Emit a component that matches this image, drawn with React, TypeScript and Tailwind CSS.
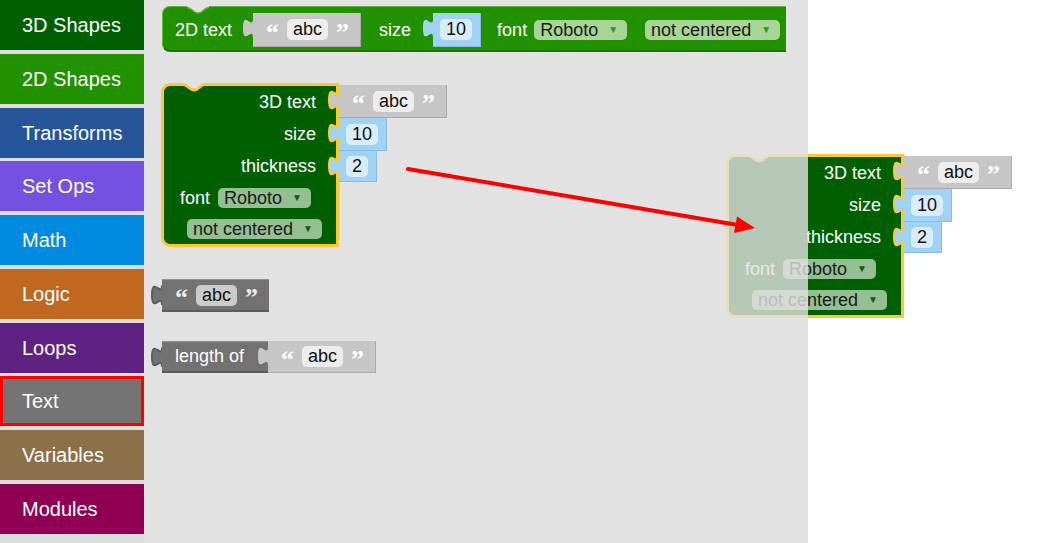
import React from "react";

// toolbox categories, top to bottom
const categories = [
  { name: "3D Shapes", bg: "bg-[#006000]" },
  { name: "2D Shapes", bg: "bg-[#219100]" },
  { name: "Transforms", bg: "bg-[#27559a]" },
  { name: "Set Ops", bg: "bg-[#7451e0]" },
  { name: "Math", bg: "bg-[#008ae0]" },
  { name: "Logic", bg: "bg-[#c06820]" },
  { name: "Loops", bg: "bg-[#602282]" },
  { name: "Text", bg: "bg-[#747474]", selected: true },
  { name: "Variables", bg: "bg-[#8c7049]" },
  { name: "Modules", bg: "bg-[#900052]" },
];

function Sidebar() {
  return (
    <div className="flex w-[144px] shrink-0 flex-col gap-[3.75px] bg-[#dddddd]">
      {categories.map((cat) => (
        <div
          key={cat.name}
          className={`flex h-[50px] items-center text-[20px] text-white ${cat.bg} ${
            cat.selected ? "border-[3px] border-[#ff0000] pl-[19px]" : "pl-[22px]"
          }`}
        >
          {cat.name}
        </div>
      ))}
    </div>
  );
}

// output tab on the left side of a value block
function Tab({ fill, stroke }: { fill: string; stroke?: string }) {
  return (
    <svg width="13" height="21" viewBox="0 0 13 21" className="absolute left-[-11px] top-[5px]">
      <path d="M11,0.5 C11,13 1,-9.5 1,10 S11,7 11,20" fill={fill} stroke={stroke ?? "none"} strokeWidth={stroke ? 2 : 0} />
      <rect x="11" y="0" width="2" height="21" fill={fill} />
    </svg>
  );
}

// previous-connection notch at the top of a statement block
function Notch({ stroke, width, className }: { stroke: string; width: number; className: string }) {
  return (
    <svg width="22" height="10" viewBox="0 0 22 10" className={`absolute ${className}`}>
      <path d="M0,0 L22,0 L22,1.5 C17,1.5 16,7 11,7 C6,7 5,1.5 0,1.5 Z" fill="#e2e2e2" />
      <path d="M22,1.5 C17,1.5 16,7 11,7 C6,7 5,1.5 0,1.5" fill="none" stroke={stroke} strokeWidth={width} />
    </svg>
  );
}

function Quote({ dark, children }: { dark?: boolean; children: string }) {
  return (
    <span
      className={`mt-[-2px] h-[14px] font-['Liberation_Serif',serif] text-[26px] font-bold leading-[22px] ${
        dark ? "text-[#ececec]" : "text-white"
      }`}
    >
      {children}
    </span>
  );
}

function TextValue({
  dark,
  h,
  tabStroke,
}: {
  dark?: boolean;
  h: string;
  tabStroke?: string;
}) {
  const fill = dark ? "#727272" : "#c6c6c6";
  return (
    <div
      className={`relative flex shrink-0 items-center gap-[8px] pl-[13px] pr-[11px] ${h} ${
        dark
          ? "border-t border-b-2 border-t-[#8e8e8e] border-b-[#5b5b5b] bg-[#727272]"
          : "border-r border-b border-r-[#ababab] border-b-[#ababab] bg-[#c6c6c6]"
      }`}
    >
      <Tab fill={fill} stroke={tabStroke} />
      <Quote dark={dark}>“</Quote>
      <span
        className={`rounded-[5px] px-[6px] text-[18px] leading-[21px] text-[#111] ${
          dark ? "bg-[#cbcbcb]" : "bg-[#ededed]"
        }`}
      >
        abc
      </span>
      <Quote dark={dark}>”</Quote>
    </div>
  );
}

function NumValue({ value, h, tabStroke }: { value: string; h: string; tabStroke?: string }) {
  return (
    <div
      className={`relative flex shrink-0 items-center border-r border-b border-r-[#86bde3] border-b-[#86bde3] bg-[#a0d2f3] pl-[7px] pr-[8px] ${h}`}
    >
      <Tab fill="#a0d2f3" stroke={tabStroke} />
      <span className="rounded-[5px] bg-[#d9ecfa] px-[6px] text-[18px] leading-[21px] text-[#111]">{value}</span>
    </div>
  );
}

function Dropdown({ label, light }: { label: string; light?: boolean }) {
  return (
    <span
      className={`flex h-[20px] items-center gap-[10px] rounded-[5px] pl-[6px] pr-[9px] text-[18px] leading-[20px] text-[#1a1a1a] ${
        light ? "bg-[#a6d597]" : "bg-[#93bf93]"
      }`}
    >
      {label}
      <span className={`text-[10px] ${light ? "text-[#2c9a14]" : "text-[#0b5e0b]"}`}>▼</span>
    </span>
  );
}

function Block3D({ className }: { className: string }) {
  const yellow = "#fcc734";
  return (
    <div className={`absolute flex items-start ${className}`}>
      <div className="relative flex w-[178px] flex-col rounded-l-[9px] border-[3px] border-[#fcc734] bg-[#005f00] text-[18px] text-white">
        <Notch stroke={yellow} width={3} className="left-[19px] top-[-3px]" />
        <div className="flex h-[32px] items-center justify-end pr-[20px]">3D text</div>
        <div className="flex h-[32px] items-center justify-end pr-[20px]">size</div>
        <div className="flex h-[32px] items-center justify-end pr-[20px]">thickness</div>
        <div className="flex h-[32px] items-center gap-[8px] pl-[16px]">
          font <Dropdown label="Roboto" />
        </div>
        <div className="flex h-[30px] items-center pl-[23px]">
          <Dropdown label="not centered" />
        </div>
      </div>
      <div className="flex flex-col items-start pt-[2px]">
        <TextValue h="h-[33px]" tabStroke={yellow} />
        <NumValue value="10" h="h-[33px]" tabStroke={yellow} />
        <NumValue value="2" h="h-[31px]" tabStroke={yellow} />
      </div>
    </div>
  );
}

export default function App() {
  return (
    <div className="relative flex h-[543px] w-[1063px] overflow-hidden bg-white font-['Liberation_Sans',Arial,sans-serif]">
      <Sidebar />
      <div className="h-full w-[664px] shrink-0 bg-[#e2e2e2]" />
      <div className="flex-1 bg-white" />

      {/* 2D text block */}
      <div className="absolute left-[162px] top-[6px] flex h-[46px] w-[624px] items-center rounded-l-[8px] border-t border-l border-b-2 border-t-[#5cb43e] border-l-[#5cb43e] border-b-[#1b7300] bg-[#229100] pl-[12px] pt-[3px] text-[18px] text-white">
        <Notch stroke="#5cb43e" width={1.5} className="left-[24px] top-[-1px]" />
        <span>2D text</span>
        <div className="ml-[21px]">
          <TextValue h="h-[34px]" />
        </div>
        <span className="ml-[18px]">size</span>
        <div className="ml-[22px]">
          <NumValue value="10" h="h-[34px]" />
        </div>
        <span className="ml-[16px]">font</span>
        <span className="ml-[7px]">
          <Dropdown label="Roboto" light />
        </span>
        <span className="ml-[18px]">
          <Dropdown label="not centered" light />
        </span>
      </div>

      <Block3D className="left-[161px] top-[83px]" />

      {/* standalone text block */}
      <div className="absolute left-[162px] top-[279px]">
        <TextValue dark h="h-[33px]" tabStroke="#5d5d5d" />
      </div>

      {/* length of */}
      <div className="absolute left-[162px] top-[341px] flex h-[32px] items-stretch">
        <div className="relative flex items-center border-t border-b-2 border-t-[#8e8e8e] border-b-[#5b5b5b] bg-[#727272] pl-[13px] pr-[24px] text-[18px] text-white">
          <Tab fill="#727272" stroke="#5d5d5d" />
          length of
        </div>
        <TextValue h="h-[32px]" />
      </div>

      {/* block being dragged, faded where it still lies over the workspace */}
      <Block3D className="left-[726px] top-[154px]" />
      <div className="absolute left-[716px] top-[148px] h-[175px] w-[92px] bg-[#e2e2e2]/80" />

      <svg className="pointer-events-none absolute left-0 top-0" width="1063" height="543">
        <line x1="408" y1="169" x2="738" y2="225" stroke="#ff0000" strokeWidth="4" strokeLinecap="round" />
        <polygon points="737,216.5 755,228 734,233" fill="#ff0000" />
      </svg>
    </div>
  );
}
